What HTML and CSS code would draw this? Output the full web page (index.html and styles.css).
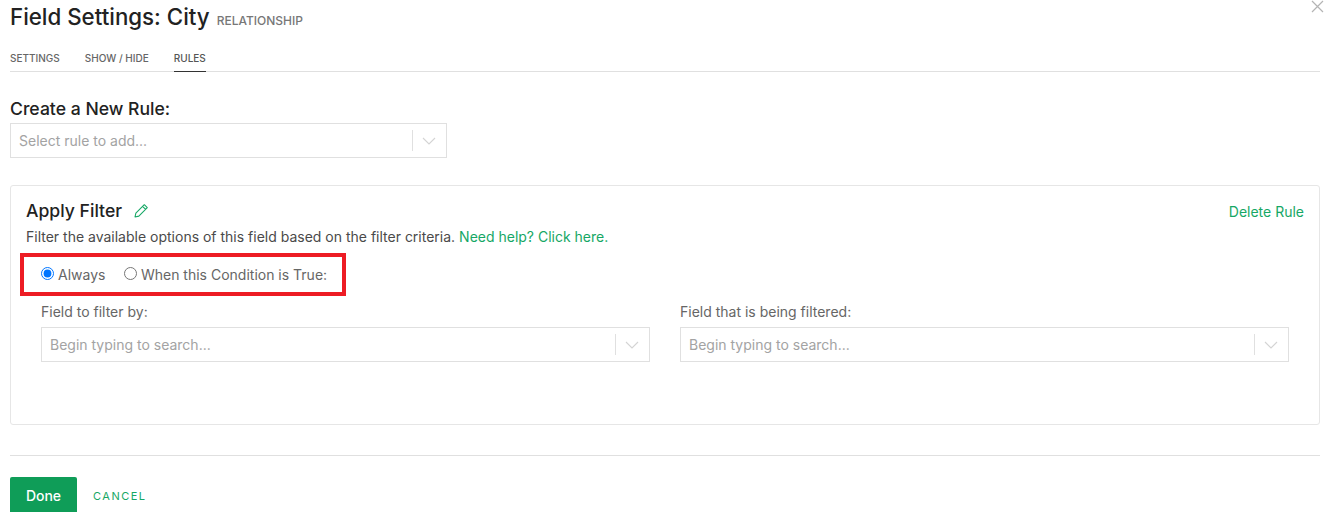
FILE: index.html
```html
<!DOCTYPE html>
<html lang="en">
<head>
<meta charset="utf-8">
<title>Field Settings: City</title>
<link rel="stylesheet" href="styles.css">
</head>
<body>
<div class="modal">
  <button class="close" aria-label="Close">
    <svg width="13" height="13" viewBox="0 0 13 13"><path d="M1 1l11 11M12 1L1 12" stroke="#b4b4b4" stroke-width="1.2" fill="none"/></svg>
  </button>
  <header class="head">
    <h1 class="title">Field Settings: City</h1>
    <span class="subtitle">RELATIONSHIP</span>
  </header>
  <nav class="tabs">
    <a class="tab">SETTINGS</a>
    <a class="tab">SHOW / HIDE</a>
    <a class="tab active">RULES</a>
  </nav>
  <h2 class="section-title">Create a New Rule:</h2>
  <div class="select narrow">
    <span class="placeholder">Select rule to add...</span>
    <span class="sep"></span>
    <svg class="chev" width="14" height="8" viewBox="0 0 14 8"><path d="M1 1l6 6 6-6" stroke="#d4d4d4" stroke-width="1.1" fill="none"/></svg>
  </div>
  <section class="card">
    <div class="card-head">
      <div class="card-title">
        <h3>Apply Filter</h3>
        <svg width="16" height="16" viewBox="0 0 15 15"><path d="M10.6 1.6l2.8 2.8-7.9 7.9-3.6.8.8-3.6zM9 3.2l2.8 2.8" stroke="#16a765" stroke-width="1" fill="none" stroke-linejoin="round"/></svg>
      </div>
      <a class="link delete">Delete Rule</a>
    </div>
    <p class="desc">Filter the available options of this field based on the filter criteria. <a class="link">Need help? Click here.</a></p>
    <div class="radios">
      <label class="radio"><input type="radio" name="cond" checked>Always</label>
      <label class="radio"><input type="radio" name="cond">When this Condition is True:</label>
    </div>
    <div class="fields">
      <div class="field">
        <label class="field-label">Field to filter by:</label>
        <div class="select">
          <span class="placeholder">Begin typing to search...</span>
          <span class="sep"></span>
          <svg class="chev" width="14" height="8" viewBox="0 0 14 8"><path d="M1 1l6 6 6-6" stroke="#d4d4d4" stroke-width="1.1" fill="none"/></svg>
        </div>
      </div>
      <div class="field">
        <label class="field-label">Field that is being filtered:</label>
        <div class="select">
          <span class="placeholder">Begin typing to search...</span>
          <span class="sep"></span>
          <svg class="chev" width="14" height="8" viewBox="0 0 14 8"><path d="M1 1l6 6 6-6" stroke="#d4d4d4" stroke-width="1.1" fill="none"/></svg>
        </div>
      </div>
    </div>
  </section>
  <footer class="foot">
    <button class="done">Done</button>
    <a class="cancel">CANCEL</a>
  </footer>
</div>
</body>
</html>
```
FILE: styles.css
```css
* { box-sizing: border-box; }
html, body { margin: 0; height: 512px; overflow: hidden; background: #fff; }
body { font-family: Inter, "Liberation Sans", sans-serif; color: #222; }
.modal { position: relative; padding: 5px 5px 0 10px; }
.close { position: absolute; top: 0; right: 1px; padding: 0; border: 0; background: none; line-height: 0; }
.head { display: flex; align-items: baseline; gap: 7px; height: 24px; }
.title { margin: 0; font-size: 22.3px; line-height: 24px; font-weight: 500; color: #222; }
.subtitle { font-size: 12px; font-weight: 500; color: #777; }
.tabs { display: flex; gap: 25px; margin-top: 17px; height: 26px; border-bottom: 1px solid #e0e0e0; }
.tab { font-size: 10px; font-weight: 500; line-height: 25px; height: 26px; color: #666; }
.tab.active { color: #555; border-bottom: 1px solid #333; }
.section-title { margin: 27px 0 0; font-size: 17.6px; line-height: 20px; font-weight: 500; color: #222; }
.select { display: flex; align-items: center; height: 35px; border: 1px solid #e0e0e0; background: #fff; padding: 0 10px 0 8px; margin: 0; }
.select.narrow { width: 437px; margin-top: 4px; }
.placeholder { flex: 1; font-size: 14px; color: #a3a3a3; }
.sep { width: 1px; height: 21px; background: #e0e0e0; margin-right: 9px; }
.card { margin-top: 27px; height: 240px; border: 1px solid #e6e6e6; border-radius: 3px; padding: 15px 15px 0; }
.card-head { display: flex; justify-content: space-between; align-items: center; height: 20px; }
.card-title { display: flex; align-items: center; gap: 11px; }
.card-title h3 { margin: 0; font-size: 17.6px; line-height: 20px; font-weight: 500; color: #222; }
.link { color: #16a765; }
.delete { font-size: 14px; }
.desc { margin: 7px 0 0; font-size: 14px; line-height: 18px; color: #4a4a4a; }
.radios { display: flex; gap: 18.5px; width: 326px; height: 43px; margin: 7px 0 0 -6px; padding: 0 0 0 17px; align-items: center; border: 4px solid #ed1c24; }
.radio { display: flex; align-items: center; font-size: 14px; color: #666; }
.radio input { width: 13px; height: 13px; margin: 0 4px 3px 0; accent-color: #0075ff; }
.fields { display: flex; gap: 30px; margin: 7px 15px 0; }
.field { flex: 1; }
.field-label { display: block; font-size: 14px; line-height: 18px; color: #666; margin-bottom: 6px; }
.foot { display: flex; align-items: flex-start; gap: 16px; margin-top: 30px; padding-top: 21px; border-top: 1px solid #e0e0e0; }
.done { width: 67px; height: 37px; border: 0; border-radius: 2px; background: #0f9d58; color: #fff; font: 500 14px Inter, sans-serif; }
.cancel { font-size: 11px; line-height: 39px; letter-spacing: 1.5px; color: #16a765; }
```
